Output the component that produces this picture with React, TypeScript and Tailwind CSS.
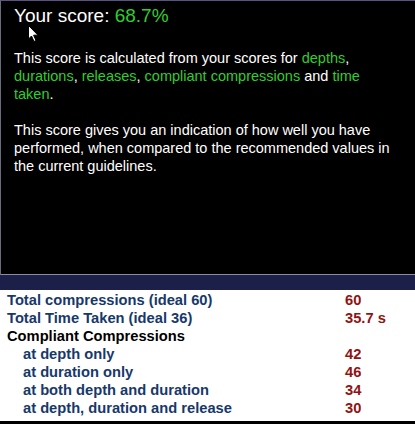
const green = "text-[#2fce2f]";

type Row = { label: string; value?: string; indent?: boolean; heading?: boolean };

const rows: Row[] = [
  { label: "Total compressions (ideal 60)", value: "60" },
  { label: "Total Time Taken (ideal 36)", value: "35.7 s" },
  { label: "Compliant Compressions", heading: true },
  { label: "at depth only", value: "42", indent: true },
  { label: "at duration only", value: "46", indent: true },
  { label: "at both depth and duration", value: "34", indent: true },
  { label: "at depth, duration and release", value: "30", indent: true },
];

function Pointer() {
  return (
    <svg
      className="absolute left-[27px] top-[24px]"
      width="12"
      height="18"
      viewBox="0 0 12 18"
    >
      <path
        d="M0.5 0.5 L0.5 14 L3.5 11 L6 16.5 L8 15.5 L5.6 10.2 L10 10.2 Z"
        fill="#ffffff"
        stroke="#000000"
        strokeWidth="1"
        strokeLinejoin="round"
      />
    </svg>
  );
}

export default function App() {
  return (
    <div className="w-[415px] h-[424px] bg-black font-['Liberation_Sans',Arial,sans-serif] flex flex-col overflow-hidden">
      {/* Score panel */}
      <div className="relative h-[275px] shrink-0 bg-black border-t border-l border-b border-t-[#5b5283] border-l-[#6a6a7c] border-b-[#8c8ca0] pl-[13px] pr-3 pt-[2px] text-white">
        <h1 className="text-[19px] leading-[26px]">
          Your score: <span className={green}>68.7%</span>
        </h1>
        <p className="mt-[20px] text-[14.5px] leading-[18px]">
          This score is calculated from your scores for <span className={green}>depths</span>,{" "}
          <span className={green}>durations</span>, <span className={green}>releases</span>,{" "}
          <span className={green}>compliant compressions</span> and{" "}
          <span className={green}>time taken</span>.
        </p>
        <p className="mt-[18px] text-[14.5px] leading-[18px]">
          This score gives you an indication of how well you have performed, when compared to the
          recommended values in the current guidelines.
        </p>
        <Pointer />
      </div>

      {/* Navy divider band */}
      <div className="h-[15px] shrink-0 bg-[#1c1f48]" />

      {/* Results table */}
      <div className="flex-1 bg-white pt-[1px] text-[14.7px] leading-[18px] font-bold">
        {rows.map((r) => (
          <div key={r.label} className="flex">
            <div
              className={`w-[345px] ${r.indent ? "pl-[23px]" : "pl-[7px]"} ${
                r.heading ? "text-black" : "text-[#17386a]"
              }`}
            >
              {r.label}
            </div>
            <div className="text-[#8e1414]">{r.value}</div>
          </div>
        ))}
      </div>
      <div className="h-[3px] shrink-0 bg-black" />
    </div>
  );
}
